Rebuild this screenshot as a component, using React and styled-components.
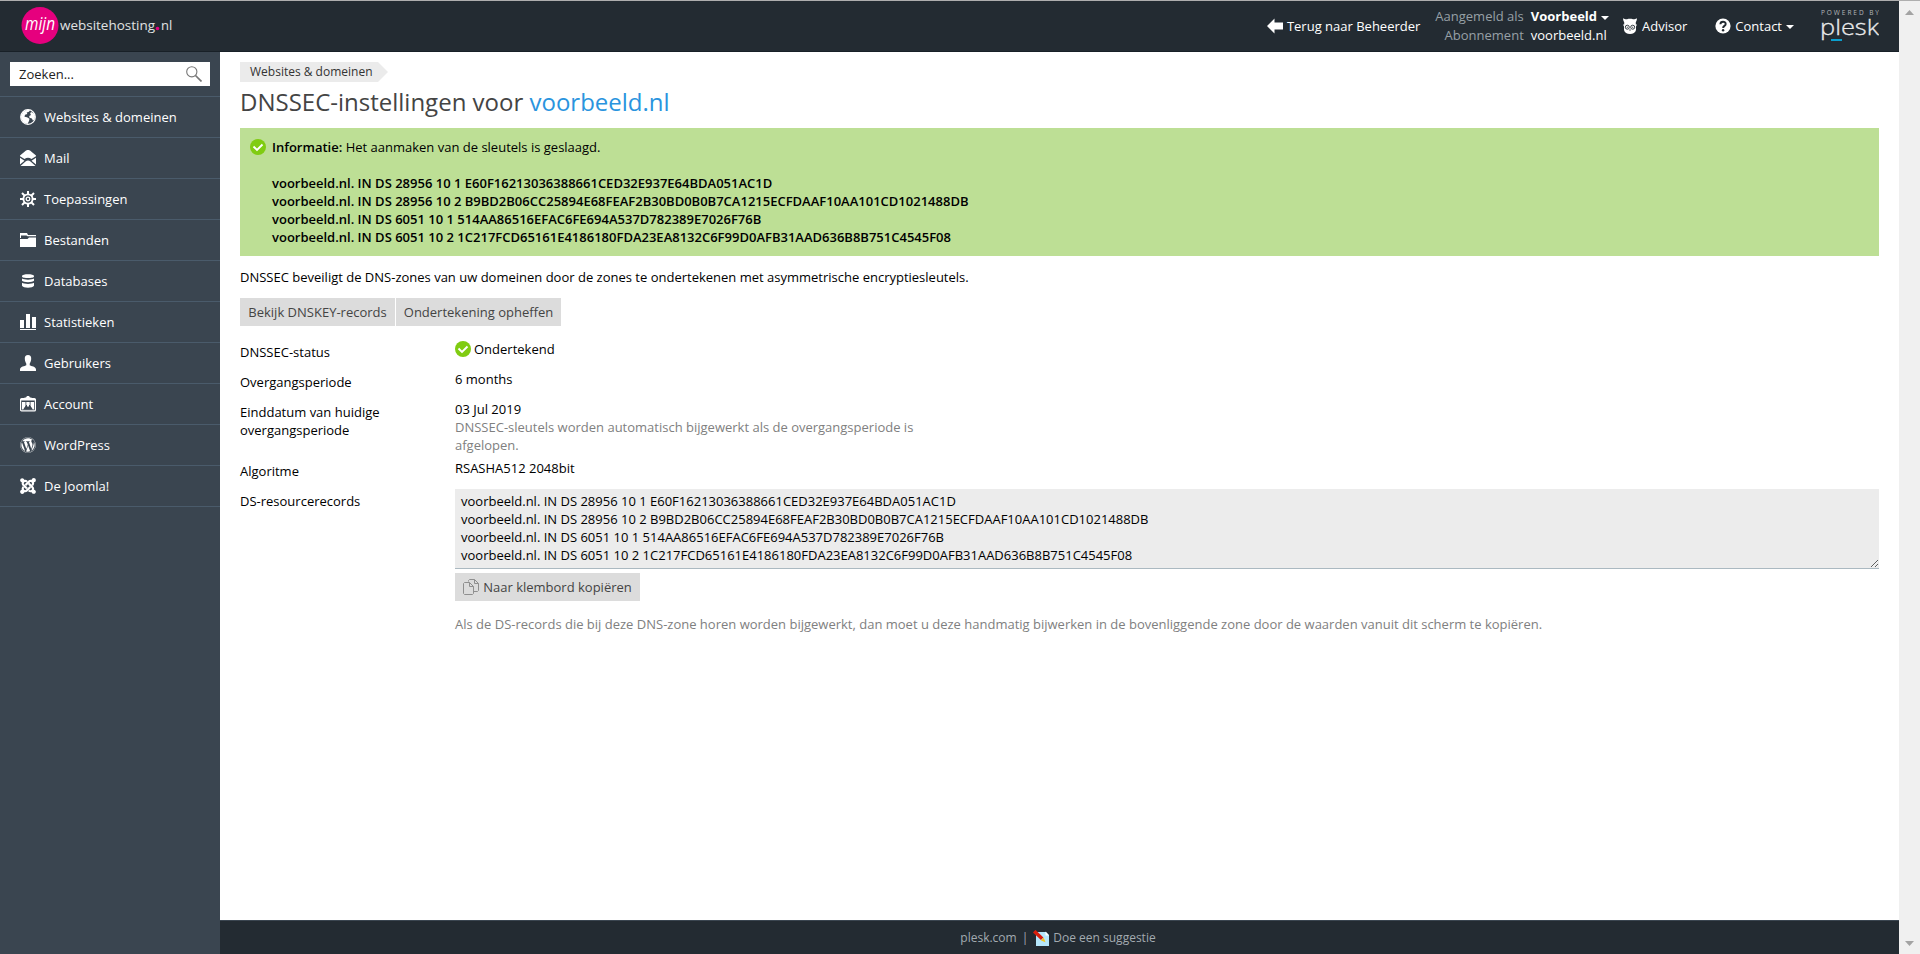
import React from 'react';
import styled, { createGlobalStyle, ThemeProvider } from 'styled-components';
import { FaWordpress, FaJoomla } from 'react-icons/fa';

const theme = {
	header: '#232b32',
	sidebar: '#3a4550',
	line: '#4a5b6b',
	text: '#000',
	muted: '#808080',
	grey: '#dcdcdc',
	link: '#2a94de',
	success: '#bddf95',
	font: `'Open Sans', 'Noto Sans', sans-serif`,
};

const GlobalStyle = createGlobalStyle`
	*{
		box-sizing:border-box;
		margin:0;
		padding:0;
	}
	body{
		font-family:${theme.font};
		font-size:13px;
		line-height:18px;
		color:${theme.text};
		background:#fff;
		overflow:hidden;
	}
	svg{
		display:block;
		flex:none;
	}
	a{
		color:inherit;
		text-decoration:none;
	}
`

const Window = styled.div`
	height:100vh;
	display:flex;
	border-top:1px solid #aeaeae;
`
const Page = styled.div`
	flex:1;
	min-width:0;
	display:flex;
	flex-direction:column;
`
const Scrollbar = styled.div`
	width:21px;
	background:#f0f0f0;
	display:flex;
	flex-direction:column;
	justify-content:space-between;
	align-items:center;
	padding:9px 0 8px;
`

/* header */
const Header = styled.header`
	height:51px;
	background:${props => props.theme.header};
	border-bottom:1px solid #182027;
	display:flex;
	align-items:flex-start;
	color:#fff;
	padding:0 20px;
`
const Brand = styled.a`
	display:flex;
	align-items:center;
	height:48px;
	margin-right:auto;
`
const HeaderLink = styled.a`
	display:flex;
	align-items:center;
	gap:4px;
	margin:16px ${props => props.$after || 0}px 0 0;
`
const Powered = styled.div`
	margin-top:8px;
`
const Session = styled.dl`
	display:grid;
	grid-template-columns:auto auto;
	column-gap:7px;
	margin:6px 13px 0 0;
	line-height:19px;

	dt{
		text-align:right;
		color:#97a0a6;
	}
	dd{
		display:flex;
		align-items:center;
		gap:4px;
	}
`
const Strong = styled.span`
	font-weight:${props => props.$weight || 600};
`
const Caret = styled.span`
	border:4px solid transparent;
	border-top-color:#fff;
	border-bottom:0;
	margin-top:2px;
`

/* sidebar */
const Body = styled.div`
	flex:1;
	display:flex;
	min-height:0;
`
const Sidebar = styled.aside`
	width:220px;
	background:${props => props.theme.sidebar};
	color:#fff;
`
const Search = styled.div`
	height:24px;
	margin:10px;
	padding:0 8px 0 9px;
	background:#fff;
	color:#222;
	display:flex;
	align-items:center;
	justify-content:space-between;
`
const Menu = styled.nav`
	border-top:1px solid ${props => props.theme.line};
`
const MenuItem = styled.a`
	height:41px;
	padding-left:20px;
	display:flex;
	align-items:center;
	gap:8px;
	border-bottom:1px solid ${props => props.theme.line};
`
const JoomlaIcon = styled(FaJoomla)`
	width:18px;
	height:18px;
	margin:0 -1px;
`

/* content */
const Main = styled.div`
	flex:1;
	min-width:0;
	display:flex;
	flex-direction:column;
`
const Content = styled.main`
	flex:1;
	padding:10px 20px 0;
`
const Crumb = styled.a`
	display:inline-block;
	vertical-align:top;
	height:20px;
	line-height:19px;
	width:148px;
	padding-left:10px;
	font-size:12px;
	color:#333;
	background:#ebebeb;
	clip-path:polygon(0 0, 138px 0, 100% 50%, 138px 100%, 0 100%);
`
const Title = styled.h1`
	font-size:24px;
	line-height:32px;
	font-weight:400;
	color:#444;
	margin:4px 0 10px;

	a{
		color:${props => props.theme.link};
	}
`
const Message = styled.section`
	display:flex;
	gap:6px;
	padding:10px;
	background:${props => props.theme.success};

	svg{
		margin-top:1px;
	}
`
const Records = styled.p`
	margin-top:18px;
	font-weight:600;
	white-space:pre-line;
`
const Description = styled.p`
	margin:12px 0;
`
const Buttons = styled.div`
	display:flex;
	gap:1px;
	margin-bottom:14px;
`
const Button = styled.button`
	width:${props => props.$width}px;
	height:28px;
	padding-bottom:1px;
	border:0;
	background:${props => props.theme.grey};
	color:#444;
	font:inherit;
	display:flex;
	align-items:center;
	justify-content:center;
	gap:4px;
`
const Row = styled.div`
	display:flex;
	min-height:${props => props.$height || 30}px;
`
const Label = styled.div`
	width:215px;
	padding:3px 50px 0 0;
`
const Value = styled.div`
	flex:1;
	min-width:0;
`
const Status = styled.div`
	display:flex;
	align-items:center;
	gap:3px;
`
const Hint = styled.p`
	width:${props => props.$width || 'auto'};
	color:${props => props.theme.muted};
`
const TextArea = styled.textarea`
	display:block;
	width:100%;
	height:80px;
	padding:3px 6px 4px;
	border:0;
	border-bottom:1px solid #abb9c1;
	background:#ececec;
	color:#000;
	font:inherit;
	resize:vertical;
	overflow:hidden;
	outline:none;
	margin-bottom:4px;
`
const Footer = styled.footer`
	height:34px;
	background:${props => props.theme.header};
	border-top:1px solid #3a4550;
	color:#a2aab0;
	font-size:12px;
	display:flex;
	justify-content:center;
	align-items:center;
	gap:5px;
	padding-right:3px;

	a{
		display:flex;
		align-items:center;
		gap:4px;
	}
`

const Icon = ({ children, size = 16 }) => (
	<svg width={size} height={size} viewBox="0 0 16 16" fill="#fff">{children}</svg>
)

const CheckIcon = () => (
	<Icon>
		<circle cx="8" cy="8" r="8" fill="#80cc12"/>
		<path d="M3.500 7.500l3.500 3.500 5.500-5.500" fill="none" stroke="#fff" strokeWidth="1.900"/>
	</Icon>
)

const GlobeIcon = () => (
	<Icon>
		<circle cx="8" cy="8" r="7.300" fill="none" stroke="#fff" strokeWidth="1.200"/>
		<path d="M1 7L3 3l4-2.300 3 .3-1 1.700-2.300.8.600 1.500-2.300.8-.5 2 2.500.4 2.500 1.600-.5 2.200L7.500 15l-4-1.500L1.200 10z"/>
		<path d="M11 3l2.500 1 1.500 3-.3 3-1.700 1.800-1.100-2.300-2.400-.8-.3-1.700 1.800-.9-.8-1.600z"/>
	</Icon>
)

const MailIcon = () => (
	<Icon>
		<path d="M0 5.500L6 .5Q8-.6 10 .5l6 5v.7L11.500 9Q8 6.600 4.500 9L0 6.200z"/>
		<path d="M0 7.800l4.500 3L0 14.600zM16 7.800l-4.500 3 4.500 3.800zM.5 16l5-4.600Q8 9.500 10.500 11.400l5 4.600z"/>
	</Icon>
)

const GearIcon = () => (
	<Icon>
		<g stroke="#fff" strokeWidth="2">
			<path d="M8 0v4M8 12v4M0 8h4M12 8h4M2 2l3 3M11 11l3 3M14 2l-3 3M5 11l-3 3"/>
		</g>
		<circle cx="8" cy="8" r="4.600" fill="#3a4550" stroke="#fff" strokeWidth="1.900"/>
		<circle cx="8" cy="8" r="1.800" fill="none" stroke="#fff" strokeWidth="1.300"/>
	</Icon>
)

const FolderIcon = () => (
	<Icon>
		<path d="M0 1h7l1 2h8v1.300H7.500L6.500 3.500H1V6H0z"/>
		<path d="M0 7h7.500L9 5.500h7V15H0z"/>
	</Icon>
)

const DatabaseIcon = () => (
	<Icon>
		<path d="M2 3c0-2.500 12-2.500 12 0v.6c0 2-12 2-12 0z"/>
		<path d="M2 5.500c2 1.500 10 1.500 12 0v2.300c-1 1.900-11 1.900-12 0z"/>
		<path d="M2 9.800c2 1.500 10 1.500 12 0v3c-1 2.600-11 2.600-12 0z"/>
	</Icon>
)

const StatsIcon = () => (
	<Icon>
		<path d="M0 6h4v8H0zM6 0h4v14H6zM12 3h4v11h-4zM0 15h16v1H0z"/>
	</Icon>
)

const UserIcon = () => (
	<Icon>
		<path d="M8 0c2.300 0 3.400 1.600 3.200 4C11 6.500 10 8 9.700 8.700v1.500c1.300.9 6.300 1.300 6.300 4.300V16H0v-1.500c0-3 5-3.400 6.300-4.300V8.700C6 8 5 6.500 4.800 4 4.600 1.600 5.700 0 8 0z"/>
	</Icon>
)

const AccountIcon = () => (
	<Icon>
		<path d="M7 0h2l1 1.500h1.500V3.500h-7V1.500H6z"/>
		<rect x=".6" y="2.600" width="14.800" height="12.300" rx="1" fill="none" stroke="#fff" strokeWidth="1.200"/>
		<path d="M.5 3h15v1.500H.5z"/>
		<path d="M2 6h12v7.500H2z"/>
		<path d="M5.500 6h5v3.700l1.800 3.800H3.700l1.800-3.800z" fill="#3a4550"/>
		<path d="M3 13.500L5.500 10.500h5l2.500 3z" fill="#3a4550"/>
		<path d="M6.300 6h3.400v3h-.7v1.500H7V9h-.7z"/>
	</Icon>
)

const SearchIcon = () => (
	<Icon>
		<circle cx="5.800" cy="5.800" r="5.100" fill="none" stroke="#777" strokeWidth="1.100"/>
		<path d="M9.500 9.500l6 6" stroke="#777" strokeWidth="1.700"/>
	</Icon>
)

const OwlIcon = () => (
	<Icon>
		<path d="M1 .3C3 1.300 4 1.500 5 1.200 7 .6 9 .6 11 1.200 12 1.500 13 1.300 15 .3 14.800 2 14.600 3 13.800 4.200V6.500H15L14 8.500v3.500C13.500 14.800 11 16 8 16S2.500 14.800 2 12V8.500L1 6.500h1.200V4.200C1.400 3 1.200 2 1 .3z"/>
		<g fill="#fff" stroke="#232b32" strokeWidth=".9">
			<circle cx="5.300" cy="9.200" r="2"/>
			<circle cx="10.700" cy="9.200" r="2"/>
		</g>
		<path d="M4.800 8.700h1v1h-1zM10.200 8.700h1v1h-1zM7.200 11.500h1.600L8 13.300z" fill="#232b32"/>
	</Icon>
)

const HelpIcon = () => (
	<Icon>
		<circle cx="8" cy="8" r="7.600"/>
		<path d="M5.400 6.200C5.400 2.800 10.700 3 10.700 6 10.700 8 8.100 7.800 8.100 10" fill="none" stroke="#232b32" strokeWidth="1.900"/>
		<circle cx="8.100" cy="12.200" r="1.200" fill="#232b32"/>
	</Icon>
)

const BackIcon = () => (
	<Icon>
		<path d="M0 8l7.500-7.500V4.500H16v7H7.500v4z"/>
	</Icon>
)

const CopyIcon = () => (
	<svg width="16" height="16" viewBox="0 0 16 16" fill="none" stroke="#8f8f8f">
		<path d="M5.500 2.500v-1l1-1h5l4 4v7l-1 1h-4"/>
		<path d="M11.500.5v4h4"/>
		<path d="M1.500 3.500h5l4 4v7l-1 1h-8l-1-1v-10z"/>
		<path d="M6.500 3.500v4h4"/>
	</svg>
)

const NoteIcon = () => (
	<svg width="16" height="16" viewBox="0 0 16 16">
		<path d="M3 2h10l3 3v11H3z" fill="#b5e6fb"/>
		<path d="M12.500 1.500v4H16z" fill="#fff"/>
		<path d="M1.200 1.200l8 7.500" stroke="#d91e0c" strokeWidth="3.600"/>
		<path d="M8 10.500l2.700-2.700 1.800 4.400z" fill="#f5c518"/>
	</svg>
)

const BrandLogo = () => (
	<svg width="156" height="38" viewBox="0 0 156 38" fontFamily="'Open Sans', sans-serif">
		<circle cx="20" cy="19.500" r="18.500" fill="#e6007e"/>
		<text x="5" y="24" fontSize="18" fontStyle="italic" fill="#fff" textLength="30" lengthAdjust="spacingAndGlyphs">mijn</text>
		<text x="40" y="24" fontSize="13" fill="#e0e2e3" textLength="95" lengthAdjust="spacingAndGlyphs">websitehosting</text>
		<circle cx="137.500" cy="22.500" r="1.800" fill="#e6007e"/>
		<text x="141" y="24" fontSize="13" fill="#e0e2e3">nl</text>
	</svg>
)

const PleskLogo = () => (
	<svg width="58" height="34" viewBox="0 0 58 34" fill="#e9eaeb" fontFamily="'Open Sans', sans-serif">
		<text x="0" y="6" fontSize="6.500" fill="#b4b8bb" textLength="58">POWERED BY</text>
		<text x="-1" y="26" fontSize="22" fontWeight="300" textLength="59" lengthAdjust="spacingAndGlyphs" stroke="#e9eaeb" strokeWidth=".3">plesk</text>
		<path d="M10 30h11v2H10z" fill="#0b9fce"/>
	</svg>
)

const menu = [
	{ title: 'Websites & domeinen', icon: <GlobeIcon/> },
	{ title: 'Mail', icon: <MailIcon/> },
	{ title: 'Toepassingen', icon: <GearIcon/> },
	{ title: 'Bestanden', icon: <FolderIcon/> },
	{ title: 'Databases', icon: <DatabaseIcon/> },
	{ title: 'Statistieken', icon: <StatsIcon/> },
	{ title: 'Gebruikers', icon: <UserIcon/> },
	{ title: 'Account', icon: <AccountIcon/> },
	{ title: 'WordPress', icon: <FaWordpress size={16}/> },
	{ title: 'De Joomla!', icon: <JoomlaIcon/> },
]

const records = [
	'voorbeeld.nl. IN DS 28956 10 1 E60F16213036388661CED32E937E64BDA051AC1D',
	'voorbeeld.nl. IN DS 28956 10 2 B9BD2B06CC25894E68FEAF2B30BD0B0B7CA1215ECFDAAF10AA101CD1021488DB',
	'voorbeeld.nl. IN DS 6051 10 1 514AA86516EFAC6FE694A537D782389E7026F76B',
	'voorbeeld.nl. IN DS 6051 10 2 1C217FCD65161E4186180FDA23EA8132C6F99D0AFB31AAD636B8B751C4545F08',
].join('\n')

const TopBar = () => (
	<Header>
		<Brand href="#"><BrandLogo/></Brand>
		<HeaderLink href="#" $after={15}><BackIcon/>Terug naar Beheerder</HeaderLink>
		<Session>
			<dt>Aangemeld als</dt>
			<dd><Strong $weight={700}>Voorbeeld</Strong><Caret/></dd>
			<dt>Abonnement</dt>
			<dd>voorbeeld.nl</dd>
		</Session>
		<HeaderLink href="#" $after={28}><OwlIcon/>Advisor</HeaderLink>
		<HeaderLink href="#" $after={27}><HelpIcon/>Contact<Caret/></HeaderLink>
		<Powered><PleskLogo/></Powered>
	</Header>
)

const App = () => {
	return (
		<ThemeProvider theme={theme}>
			<GlobalStyle/>
			<Window>
				<Page>
					<TopBar/>
					<Body>
						<Sidebar>
							<Search>Zoeken...<SearchIcon/></Search>
							<Menu>
								{menu.map(item => (
									<MenuItem href="#" key={item.title}>{item.icon}{item.title}</MenuItem>
								))}
							</Menu>
						</Sidebar>
						<Main>
							<Content>
								<Crumb href="#">Websites &amp; domeinen</Crumb>
								<Title>DNSSEC-instellingen voor <a href="#">voorbeeld.nl</a></Title>
								<Message>
									<CheckIcon/>
									<div>
										<p><Strong>Informatie:</Strong> Het aanmaken van de sleutels is geslaagd.</p>
										<Records>{records}</Records>
									</div>
								</Message>
								<Description>
									DNSSEC beveiligt de DNS-zones van uw domeinen door de zones te ondertekenen met asymmetrische encryptiesleutels.
								</Description>
								<Buttons>
									<Button $width={155}>Bekijk DNSKEY-records</Button>
									<Button $width={165}>Ondertekening opheffen</Button>
								</Buttons>
								<Row>
									<Label>DNSSEC-status</Label>
									<Value><Status><CheckIcon/>Ondertekend</Status></Value>
								</Row>
								<Row>
									<Label>Overgangsperiode</Label>
									<Value>6 months</Value>
								</Row>
								<Row $height={59}>
									<Label>Einddatum van huidige overgangsperiode</Label>
									<Value>
										03 Jul 2019
										<Hint $width="480px">DNSSEC-sleutels worden automatisch bijgewerkt als de overgangsperiode is afgelopen.</Hint>
									</Value>
								</Row>
								<Row>
									<Label>Algoritme</Label>
									<Value>RSASHA512 2048bit</Value>
								</Row>
								<Row $height={126}>
									<Label>DS-resourcerecords</Label>
									<Value>
										<TextArea readOnly value={records}/>
										<Button $width={185}><CopyIcon/>Naar klembord kopiëren</Button>
									</Value>
								</Row>
								<Row>
									<Label/>
									<Value>
										<Hint>Als de DS-records die bij deze DNS-zone horen worden bijgewerkt, dan moet u deze handmatig bijwerken in de bovenliggende zone door de waarden vanuit dit scherm te kopiëren.</Hint>
									</Value>
								</Row>
							</Content>
							<Footer>
								<a href="#">plesk.com</a>
								<span>|</span>
								<a href="#"><NoteIcon/>Doe een suggestie</a>
							</Footer>
						</Main>
					</Body>
				</Page>
				<Scrollbar>
					<svg width="9" height="5" viewBox="0 0 9 5" fill="#a3a3a3"><path d="M0 5l4.500-5L9 5z"/></svg>
					<svg width="9" height="5" viewBox="0 0 9 5" fill="#a3a3a3"><path d="M0 0l4.500 5L9 0z"/></svg>
				</Scrollbar>
			</Window>
		</ThemeProvider>
	);
};

export default App;
